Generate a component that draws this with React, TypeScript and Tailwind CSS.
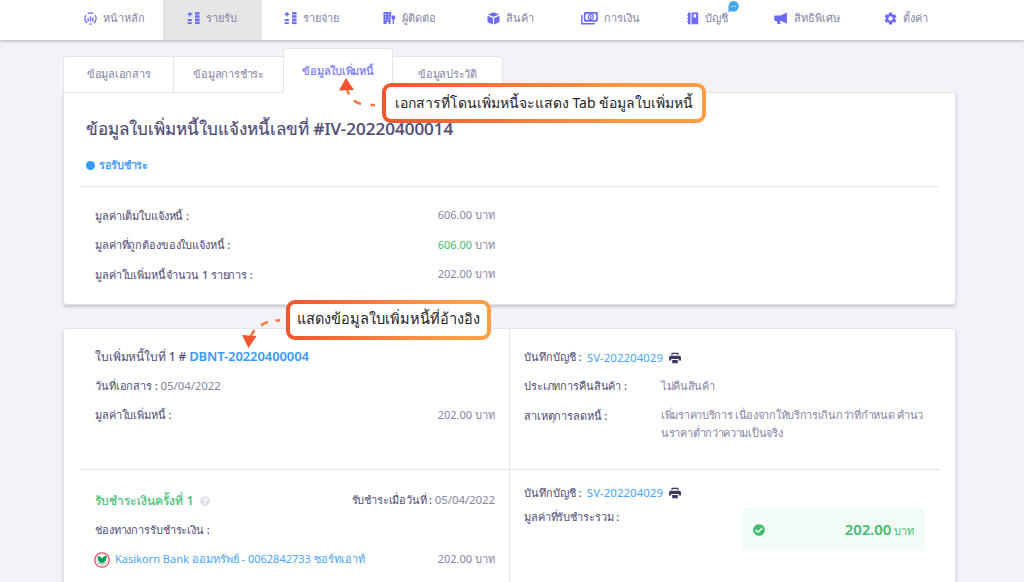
import type { ReactNode } from 'react';
import { FaCheckCircle, FaQuestionCircle } from 'react-icons/fa';
import { MdSettings } from 'react-icons/md';

const ListIcon = () => (
  <svg viewBox="0 0 13 13" className="h-[13px] w-[13px]" fill="currentColor">
    <path d="M2.2 0h1.4v1.500H5.200v1.500H3.600v1.500H2.200V3H.6V1.500h1.600zM.6 7h4.200v1.900H.6zM.6 10.200h4.200v1.900H.6z" />
    <rect x="8" y="0" width="4.500" height="12.300" rx="1" fillOpacity=".5" />
    <path d="M8 .3h4.500v1.800H8zM8 3.500h4.500v1.800H8zM8 6.900h4.500v1.800H8zM8 10.200h4.500V12H8z" />
  </svg>
);

const HomeIcon = () => (
  <svg viewBox="0 0 13 13" className="h-[13px] w-[13px]" fill="none" stroke="currentColor">
    <path d="M3.200 11A5.600 5.600 0 0 1 2 3.100M3.700 1.600a5.600 5.600 0 0 1 5.600 0M11 3.100A5.600 5.600 0 0 1 9.800 11M5 12h3" strokeWidth="1.200" />
    <path d="M4.200 6.500v3M6.500 4.200v5.300M8.800 5.500v4" strokeWidth="1.400" />
  </svg>
);

const ContactIcon = () => (
  <svg viewBox="0 0 13 13" className="h-[13px] w-[13px]" fill="currentColor">
    <path fillRule="evenodd" d="M.5 0h7.700v4.200a3 3 0 0 0 .1 4.200L7.500 9v3H5.700V9.800H3.600V12H.5zM2 1.800v1.100h1.200V1.800zm3 0v1.100h1.200V1.800zM2 4.500v1.100h1.200V4.500zm3 0v1.100h1.200V4.500zM2 7.200v1.100h1.200V7.200zm2.800 0v1.100H6V7.200z" />
    <path d="M10.300 3.300a2.300 2.300 0 0 1 .7 4.400V12H9.700V7.700a2.300 2.300 0 0 1 .6-4.400z" />
  </svg>
);

const CubeIcon = () => (
  <svg viewBox="0 0 13 13" className="h-[13px] w-[13px]" fill="currentColor">
    <path d="M6.500.3 12 2.400 6.500 4.700 1 2.400zM.5 3.700l5.400 2.200v6.500L.5 9.900zM12.500 3.700 7.100 5.900v6.500l5.400-2.500z" />
  </svg>
);

const MoneyIcon = () => (
  <svg viewBox="0 0 17 13" className="h-[13px] w-[17px]" fill="none" stroke="currentColor">
    <path d="M.8 3v8.700h13" strokeWidth="1.400" />
    <rect x="3.600" y=".9" width="12.500" height="8" rx=".6" strokeWidth="1.600" />
    <path d="M3.500 3.200 6 1M16 3.200 13.700 1M3.500 6.500 6 8.800M16 6.500l-2.300 2.300" strokeWidth="1" />
    <ellipse cx="9.800" cy="4.900" rx="2.500" ry="2.800" strokeWidth="1.300" />
    <path d="M9.800 3.400v3" strokeWidth="1.300" />
  </svg>
);

const BookIcon = () => (
  <svg viewBox="0 0 12 13" className="h-[13px] w-[12px]" fill="currentColor">
    <path d="M1 .5h2.500v11.700H1V10H.2V8.800H1V6.900H.2V5.700H1V3.800H.2V2.600H1z" />
    <path fillRule="evenodd" d="M4.500.5h6.700v11.700H4.500zM6.600 2.200v3.200h2.600V2.200z" />
  </svg>
);

const MegaphoneIcon = () => (
  <svg viewBox="0 0 14 13" className="h-[13px] w-[14px]" fill="currentColor">
    <path d="M12.900.4v11.200L6.800 8.900H5.800l.8 3.200H3.600l-1-3.200H1.200A1 1 0 0 1 .2 7.900V4.500a1 1 0 0 1 1-1h5.600z" />
  </svg>
);

const PrintIcon = () => (
  <svg viewBox="0 0 12 12" className="ml-[6px] h-3 w-3" fill="#3c395f">
    <path d="M2.500.8h7v2.500H8.500V1.900h-5v1.400h-1zM1.700 3.700h8.600A1.700 1.700 0 0 1 12 5.400v3H9.800V7.100H2.200v1.300H0v-3a1.700 1.700 0 0 1 1.700-1.700zM3.200 8.100h5.600v3.100H3.200z" />
  </svg>
);

const NAV: { label: string; icon: ReactNode; size: string; badge?: boolean }[] = [
  { label: 'หน้าหลัก', icon: <HomeIcon />, size: 'w-[40px]' },
  { label: 'รายรับ', icon: <ListIcon />, size: 'w-[31px]' },
  { label: 'รายจ่าย', icon: <ListIcon />, size: 'w-[36px]' },
  { label: 'ผู้ติดต่อ', icon: <ContactIcon />, size: 'w-[36px]' },
  { label: 'สินค้า', icon: <CubeIcon />, size: 'w-[26px]' },
  { label: 'การเงิน', icon: <MoneyIcon />, size: 'w-[34px]' },
  { label: 'บัญชี', icon: <BookIcon />, size: 'w-[24px]', badge: true },
  { label: 'สิทธิพิเศษ', icon: <MegaphoneIcon />, size: 'w-[46px]' },
  { label: 'ตั้งค่า', icon: <MdSettings className="-mx-px text-[15px]" />, size: 'w-[26px]' },
];

function Nav() {
  return (
    <nav className="relative z-10 flex h-10 shrink-0 bg-white pl-[63.500px] shadow-[0_1px_3px_rgba(40,40,60,0.35)]">
      {NAV.map((item, i) => (
        <div key={item.label} className={`flex w-[99.200px] items-center justify-center pb-1 ${i === 1 ? 'bg-[#e6e6e6]' : ''}`}>
          <span className="mr-[6px] text-[13px] text-[#6b6bf5]">{item.icon}</span>
          <span className={`relative mt-px whitespace-nowrap text-[11px] ${item.size}`}>
            {item.label}
            {item.badge && (
              <svg viewBox="0 0 11 12" className="absolute -top-[9px] left-[23px] h-3 w-[11px]">
                <path d="M5.500 0a5.300 5.300 0 1 1-2.500 10L.5 11.500V5.300A5.200 5.200 0 0 1 5.500 0z" fill="#42a5ea" />
                <path d="M2.700 5.300h6" stroke="#fff" strokeDasharray="1.200 .9" />
              </svg>
            )}
          </span>
        </div>
      ))}
    </nav>
  );
}

function Tabs() {
  const tab = 'flex w-[110px] items-center justify-center whitespace-nowrap border border-b-0 border-[#e4e4ee] bg-white text-[11px] tracking-[-0.25px]';
  return (
    <div className="flex h-11 items-end">
      <div className={`${tab} h-9 rounded-tl border-r-0`}>ข้อมูลเอกสาร</div>
      <div className={`${tab} h-9 border-r-0`}>ข้อมูลการชำระ</div>
      <div className={`${tab} relative z-10 -mb-px h-[45px] rounded-t font-medium text-[#7676fa] [-webkit-text-stroke:0.2px]`}>ข้อมูลใบเพิ่มหนี้</div>
      <div className={`${tab} h-9 rounded-tr border-l-0`}>ข้อมูลประวัติ</div>
    </div>
  );
}

const SUMMARY = [
  { label: 'มูลค่าเต็มใบแจ้งหนี้ :', value: '606.00', green: false },
  { label: 'มูลค่าที่ถูกต้องของใบแจ้งหนี้ :', value: '606.00', green: true },
  { label: 'มูลค่าใบเพิ่มหนี้จำนวน 1 รายการ :', value: '202.00', green: false },
];

const label = 'whitespace-nowrap font-medium tracking-[-0.12px] text-[#4f4c74]';

function Summary() {
  return (
    <section className="h-[213px] rounded-b border border-[#e4e4ee] bg-white px-4 shadow-[0_2px_3px_rgba(40,40,60,0.2)]">
      <h1 className="flex h-[72px] items-center whitespace-nowrap pl-[6px] text-[17px] font-medium text-[#4f4c74] [-webkit-text-stroke:0.2px]">
        ข้อมูลใบเพิ่มหนี้ใบแจ้งหนี้เลขที่ #IV-20220400014
      </h1>
      <div className="flex h-[21px] items-center pb-[21px] pl-[6px] font-medium text-[#3699ff]">
        <span className="mr-1 h-[9px] w-[9px] rounded-full bg-[#3699ff]" />
        <span className="whitespace-nowrap tracking-[-0.35px] [-webkit-text-stroke:0.3px]">รอรับชำระ</span>
      </div>
      <div className="border-t border-[#e4e4ee] pt-[14px]">
        {SUMMARY.map((row) => (
          <div key={row.label} className="flex h-[29.500px] w-[415px] items-center justify-between pl-[15px]">
            <span className={label}>{row.label}</span>
            <span className="pb-px"><span className={row.green ? 'text-[#41bd71]' : ''}>{row.value}</span> บาท</span>
          </div>
        ))}
      </div>
    </section>
  );
}

const Journal = () => (
  <div className="flex items-center whitespace-nowrap">
    <span className="font-medium text-[#4f4c74]">บันทึกบัญชี :</span>
    <span className="ml-[5px] text-[11.500px] text-[#4ba5fa]">SV-202204029</span>
    <PrintIcon />
  </div>
);

function Details() {
  return (
    <section className="mt-[23px] grid h-[300px] grid-cols-[430px_430px] grid-rows-[141px_159px] rounded border border-[#e4e4ee] bg-white px-4 shadow-[0_2px_3px_rgba(40,40,60,0.2)]">
      <div className="border-b border-r border-[#e4e4ee] pl-[15px] pr-[14px] pt-[14px]">
        <div className={`${label} flex h-[28px] items-center text-[12px] tracking-[-0.2px]`}>
          ใบเพิ่มหนี้ใบที่ 1 #<span className="ml-[3px] text-[13px] font-semibold tracking-[-0.1px] text-[#3699ff]">DBNT-20220400004</span>
        </div>
        <div className="flex h-[30px] items-center"><span className={label}>วันที่เอกสาร :</span><span className="ml-[3px] text-[11.500px] tracking-[-0.1px]">05/04/2022</span></div>
        <div className="flex h-[29px] items-center justify-between"><span className={label}>มูลค่าใบเพิ่มหนี้ :</span><span>202.00 บาท</span></div>
      </div>
      <div className="border-b border-[#e4e4ee] pl-[14px] pt-[14px]">
        <div className="flex h-[29px] items-center"><Journal /></div>
        <div className="flex h-[29px] items-center"><span className={`${label} w-[137px] shrink-0`}>ประเภทการคืนสินค้า :</span><span className="tracking-[-0.35px]">ไม่คืนสินค้า</span></div>
        <div className="flex">
          <span className={`${label} w-[137px] shrink-0 pt-[7px]`}>สาเหตุการลดหนี้ :</span>
          <span className="whitespace-nowrap pt-[5px] leading-[18px] tracking-[-0.3px]">เพิ่มราคาบริการ เนื่องจากให้บริการเกินกว่าที่กำหนด คำนว<br />นราคาต่ำกว่าความเป็นจริง</span>
        </div>
      </div>
      <div className="border-r border-[#e4e4ee] pl-[15px] pr-[14px] pt-[15px]">
        <div className="flex h-[30px] items-center justify-between">
          <span className="flex items-center whitespace-nowrap pt-px text-[12px] font-medium tracking-[0.12px] text-[#41bd71] [-webkit-text-stroke:0.2px]">รับชำระเงินครั้งที่ 1<FaQuestionCircle className="ml-[6px] text-[10px] text-[#dddde9]" /></span>
          <span className="flex items-center whitespace-nowrap"><span className="font-medium tracking-[-0.2px] text-[#4f4c74]">รับชำระเมื่อวันที่ :</span><span className="ml-[3px] text-[11.500px] tracking-[-0.1px]">05/04/2022</span></span>
        </div>
        <div className={`${label} flex h-[30px] items-center`}>ช่องทางการรับชำระเงิน :</div>
        <div className="-ml-px flex h-[29px] items-center">
          <svg viewBox="0 0 16 16" className="mr-[5px] h-4 w-4">
            <circle cx="8" cy="8" r="7.200" fill="#fff" stroke="#e84b5c" strokeWidth="1.300" />
            <path d="M2.700 9.500h10.600a5.500 5.500 0 0 1-10.600 0z" fill="#b9dfc5" />
            <path d="M3.500 4.200c2.500-.2 4 .8 4.500 2.800.7-1.900 2.300-3.200 4.700-3.400.3 3.800-1.300 6.800-4.500 7.400C5 10.800 3.400 7.700 3.500 4.200z" fill="#139b57" />
          </svg>
          <span className="whitespace-nowrap text-[#4ba5fa]">Kasikorn Bank ออมทรัพย์ - 0062842733 ซอร์ทเอาท์</span>
          <span className="ml-auto whitespace-nowrap">202.00 บาท</span>
        </div>
      </div>
      <div className="pl-[14px] pt-[11px]">
        <div className="flex h-[24px] items-center"><Journal /></div>
        <div className={`${label} flex h-[25px] items-center`}>มูลค่าที่รับชำระรวม :</div>
        <div className="-mt-[22px] ml-[218px] flex h-[43px] w-[183px] items-center justify-between rounded bg-[#f3fbf7] px-[11px] text-[#41bd71]">
          <FaCheckCircle className="text-[12px]" />
          <span><b className="text-[15px] font-semibold tracking-[-0.1px]">202.00</b> บาท</span>
        </div>
      </div>
    </section>
  );
}

const callout = 'absolute z-20 flex items-center justify-center whitespace-nowrap rounded-[9px] border-4 border-transparent pb-0.5 text-[#222] [background:linear-gradient(#fff,#fff)_padding-box,linear-gradient(90deg,#f1552f,#ff9d45_80%)_border-box]';

export default function App() {
  return (
    <div className="relative flex h-[582px] w-[1024px] flex-col overflow-hidden bg-[#f2f2f7] font-['Noto_Sans',sans-serif] text-[11px] text-[#8684a2]">
      <Nav />
      <main className="ml-[63px] mt-[8px] w-[893px]">
        <Tabs />
        <Summary />
        <Details />
      </main>
      <div className={`${callout} left-[382px] top-[83px] h-[40px] w-[324px] text-[14px]`}>เอกสารที่โดนเพิ่มหนี้จะแสดง Tab ข้อมูลใบเพิ่มหนี้</div>
      <div className={`${callout} left-[286px] top-[300px] h-[40px] w-[205px] text-[14.500px]`}>แสดงข้อมูลใบเพิ่มหนี้ที่อ้างอิง</div>
      <svg viewBox="0 0 40 30" className="absolute left-[337px] top-[77px] z-20 h-[30px] w-[40px]">
        <path d="M2 13.500 9 1l8 12z" fill="#f1552f" />
        <path d="M10 13l2 4.500M17 23.500q3 2.500 7 3.500M33.500 28h4.500" fill="none" stroke="#f77a3b" strokeWidth="2.400" />
      </svg>
      <svg viewBox="0 0 42 32" className="absolute left-[240px] top-[317px] z-20 h-[32px] w-[42px]">
        <path d="m2 18 14.500 1L8.500 31z" fill="#f1552f" />
        <path d="M10.500 19.500l4-6.500M21 8.500q3-2.500 7-3.500M35.500 3.500H40" fill="none" stroke="#f77a3b" strokeWidth="2.400" />
      </svg>
    </div>
  );
}
